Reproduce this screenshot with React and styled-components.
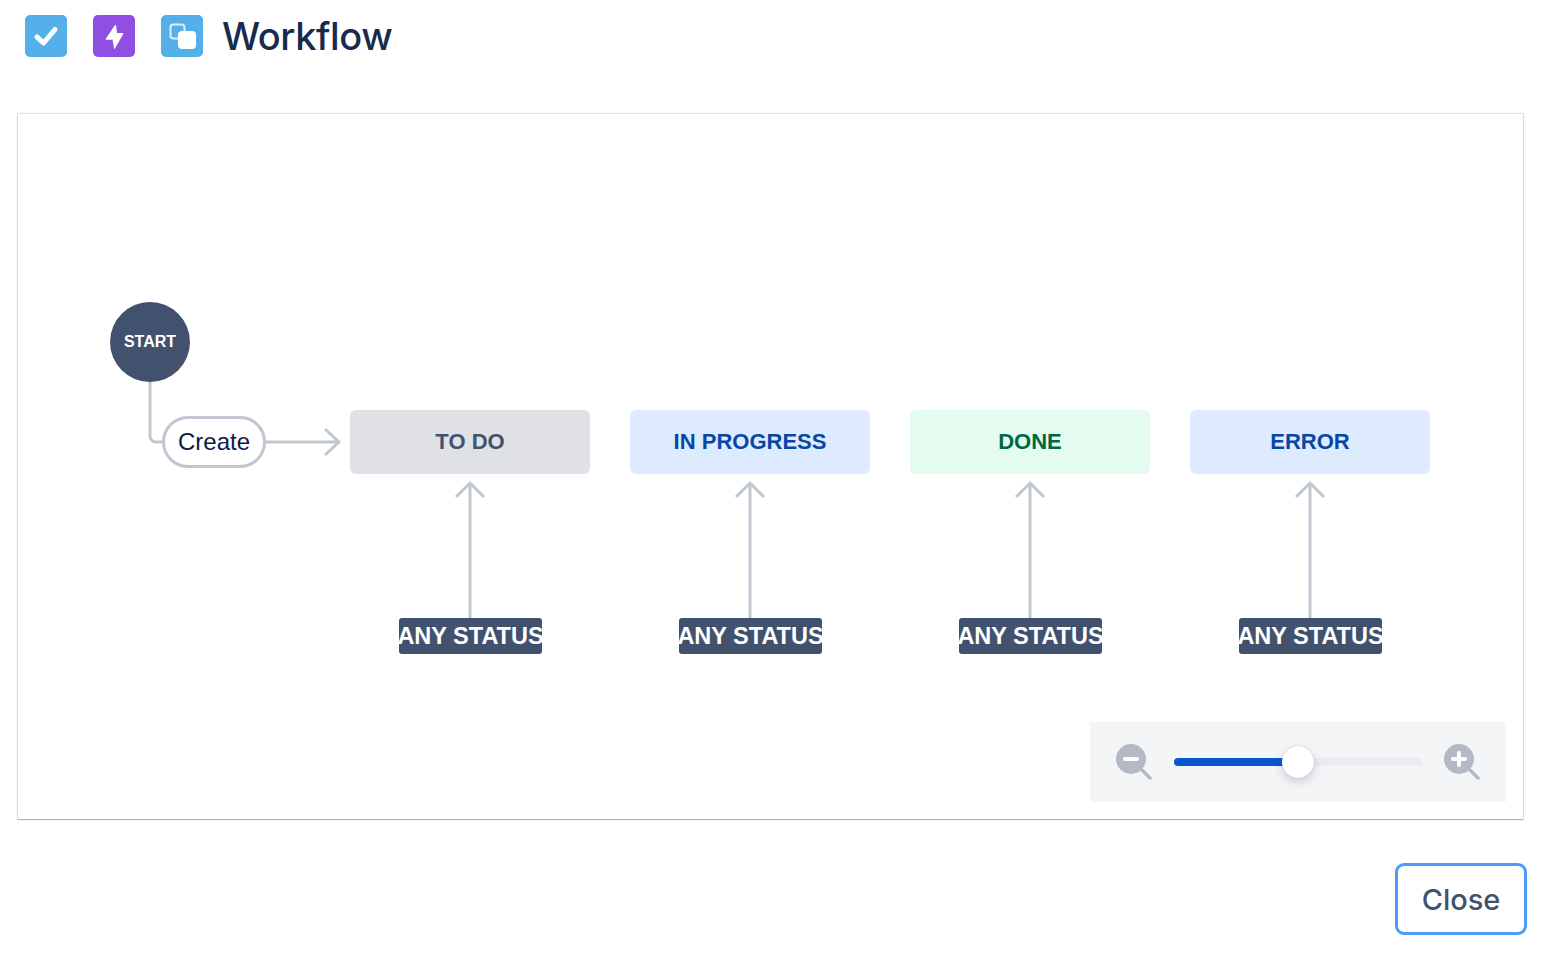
import React from 'react';
import styled, { createGlobalStyle } from 'styled-components';

const GlobalStyle = createGlobalStyle`
  html, body {
    margin: 0;
    padding: 0;
    background: #fff;
  }
`;

const Page = styled.div`
  width: 1548px;
  height: 956px;
  box-sizing: border-box;
  padding: 15px 23px 0 18px;
  display: flex;
  flex-direction: column;
  font-family: Inter, "Liberation Sans", sans-serif;
`;

const Header = styled.header`
  display: flex;
  align-items: center;
  height: 42px;
  padding-left: 7px;
  gap: 26px;
`;

const IconTile = styled.span`
  width: 42px;
  height: 42px;
  border-radius: 5px;
  background: ${(p) => p.$bg};
  flex: none;
  display: block;
  svg {
    display: block;
  }
`;

const Title = styled.h1`
  margin: 0 0 0 -7px;
  font-size: 38px;
  line-height: 46px;
  font-weight: 500;
  letter-spacing: -0.4px;
  color: #172b4d;
`;

const Canvas = styled.section`
  position: relative;
  box-sizing: border-box;
  width: 1505px;
  height: 705px;
  margin-top: 57px;
  background: #fff;
  box-shadow: 0 0 1px 1px rgba(9, 30, 66, 0.12), 0 1px 1px rgba(9, 30, 66, 0.25);
  font-family: "Liberation Sans", Arial, sans-serif;
`;

const Edges = styled.svg`
  position: absolute;
  left: 0;
  top: 0;
`;

const StartNode = styled.div`
  position: absolute;
  left: 92px;
  top: 188px;
  width: 80px;
  height: 80px;
  border-radius: 50%;
  background: #42526e;
  color: #fff;
  font-size: 16px;
  font-weight: 700;
  display: flex;
  align-items: center;
  justify-content: center;
`;

const TransitionPill = styled.div`
  position: absolute;
  left: 144px;
  top: 302px;
  box-sizing: border-box;
  width: 104px;
  height: 52px;
  border: 3px solid #c1c7d0;
  border-radius: 26px;
  background: #fff;
  color: #091e42;
  font-size: 24px;
  display: flex;
  align-items: center;
  justify-content: center;
`;

const statusColors = {
  grey: { bg: '#dfe1e6', fg: '#42526e' },
  blue: { bg: '#deebff', fg: '#0747a6' },
  green: { bg: '#e3fcef', fg: '#006644' },
};

const StatusNode = styled.div`
  position: absolute;
  left: ${(p) => p.$left}px;
  top: 296px;
  width: 240px;
  height: 64px;
  border-radius: 6px;
  background: ${(p) => statusColors[p.$tone].bg};
  color: ${(p) => statusColors[p.$tone].fg};
  font-size: 22px;
  font-weight: 700;
  display: flex;
  align-items: center;
  justify-content: center;
`;

const AnyStatus = styled.div`
  position: absolute;
  left: ${(p) => p.$left}px;
  top: 504px;
  width: 143px;
  height: 36px;
  border-radius: 3px;
  background: #42526e;
  color: #fff;
  font-size: 23.5px;
  font-weight: 700;
  white-space: nowrap;
  display: flex;
  align-items: center;
  justify-content: center;
`;

const ZoomPanel = styled.div`
  position: absolute;
  left: 1072px;
  top: 608px;
  box-sizing: border-box;
  width: 416px;
  height: 80px;
  padding: 0 26px;
  background: #f4f5f7;
  display: flex;
  align-items: center;
  justify-content: space-between;
`;

const ZoomIcon = styled.svg`
  flex: none;
  display: block;
`;

const Track = styled.div`
  position: relative;
  width: 248px;
  height: 8px;
  border-radius: 4px;
  background: #ebecf0;
`;

const TrackFill = styled.div`
  height: 100%;
  border-radius: 4px 0 0 4px;
  background: #0b55cc;
`;

const Thumb = styled.div`
  position: absolute;
  top: 50%;
  width: 32px;
  height: 32px;
  margin: -16px 0 0 -16px;
  border-radius: 50%;
  background: #fff;
  box-shadow: 0 4px 10px rgba(9, 30, 66, 0.18), 0 0 1px rgba(9, 30, 66, 0.3);
`;

const Footer = styled.footer`
  display: flex;
  justify-content: flex-end;
  margin-top: 44px;
`;

const CloseButton = styled.button`
  box-sizing: border-box;
  width: 132px;
  height: 72px;
  margin-right: -2px;
  border: 3px solid #4c9aff;
  border-radius: 9px;
  background: #fff;
  color: #42526e;
  font-family: inherit;
  font-size: 29px;
  font-weight: 500;
`;

const columns = [
  { label: 'TO DO', tone: 'grey', left: 332 },
  { label: 'IN PROGRESS', tone: 'blue', left: 612 },
  { label: 'DONE', tone: 'green', left: 892 },
  { label: 'ERROR', tone: 'blue', left: 1172 },
];

const EDGE = '#c1c7d0';

const DiagramEdges = () => (
  <Edges width="1505" height="705" fill="none" stroke={EDGE} strokeWidth="3">
    <path d="M132 266V322a6 6 0 0 0 6 6H150" />
    <path d="M246 328H320" />
    <path d="M307 315L321 328L307 341" />
    {columns.map((c) => (
      <g key={c.label}>
        <path d={`M${c.left + 120} 506V370`} />
        <path d={`M${c.left + 106} 383L${c.left + 120} 369L${c.left + 134} 383`} />
      </g>
    ))}
  </Edges>
);

const CheckIcon = () => (
  <IconTile $bg="#55b0ea">
    <svg width="42" height="42" viewBox="0 0 42 42" fill="none">
      <path d="M12 22L18.5 28L30 14.5" stroke="#fff" strokeWidth="5" strokeLinecap="round" strokeLinejoin="round" />
    </svg>
  </IconTile>
);

const BoltIcon = () => (
  <IconTile $bg="#904ee2">
    <svg width="42" height="42" viewBox="0 0 42 42">
      <path d="M22.5 10L13 24.2H20L21.5 33.5L30 18.5H23.5Z" fill="#fff" stroke="#fff" strokeWidth="1" strokeLinejoin="round" />
    </svg>
  </IconTile>
);

const SubtaskIcon = () => (
  <IconTile $bg="#55b0ea">
    <svg width="42" height="42" viewBox="0 0 42 42" fill="none">
      <rect x="9.5" y="9.5" width="14" height="14" rx="3" stroke="#fff" strokeOpacity="0.8" strokeWidth="2" />
      <rect x="17" y="16" width="18" height="18" rx="4" fill="#fff" />
    </svg>
  </IconTile>
);

const ZoomGlyph = ({ plus }) => (
  <ZoomIcon width="36" height="36" viewBox="0 0 36 36">
    <circle cx="15" cy="15" r="15" fill="#b3bac5" />
    <path d="M26 26L34 34" stroke="#b3bac5" strokeWidth="3.5" strokeLinecap="round" />
    <path d={plus ? 'M9 15H21M15 9V21' : 'M9 15H21'} stroke="#fff" strokeWidth="4" strokeLinecap="round" />
  </ZoomIcon>
);

const App = () => (
  <Page>
    <GlobalStyle />
    <Header>
      <CheckIcon />
      <BoltIcon />
      <SubtaskIcon />
      <Title>Workflow</Title>
    </Header>
    <Canvas>
      <DiagramEdges />
      <StartNode>START</StartNode>
      <TransitionPill>Create</TransitionPill>
      {columns.map((c) => (
        <StatusNode key={c.label} $left={c.left} $tone={c.tone}>{c.label}</StatusNode>
      ))}
      {columns.map((c) => (
        <AnyStatus key={c.label} $left={c.left + 49}>ANY STATUS</AnyStatus>
      ))}
      <ZoomPanel>
        <ZoomGlyph />
        <Track>
          <TrackFill style={{ width: '50%' }} />
          <Thumb style={{ left: '50%' }} />
        </Track>
        <ZoomGlyph plus />
      </ZoomPanel>
    </Canvas>
    <Footer>
      <CloseButton>Close</CloseButton>
    </Footer>
  </Page>
);

export default App;
